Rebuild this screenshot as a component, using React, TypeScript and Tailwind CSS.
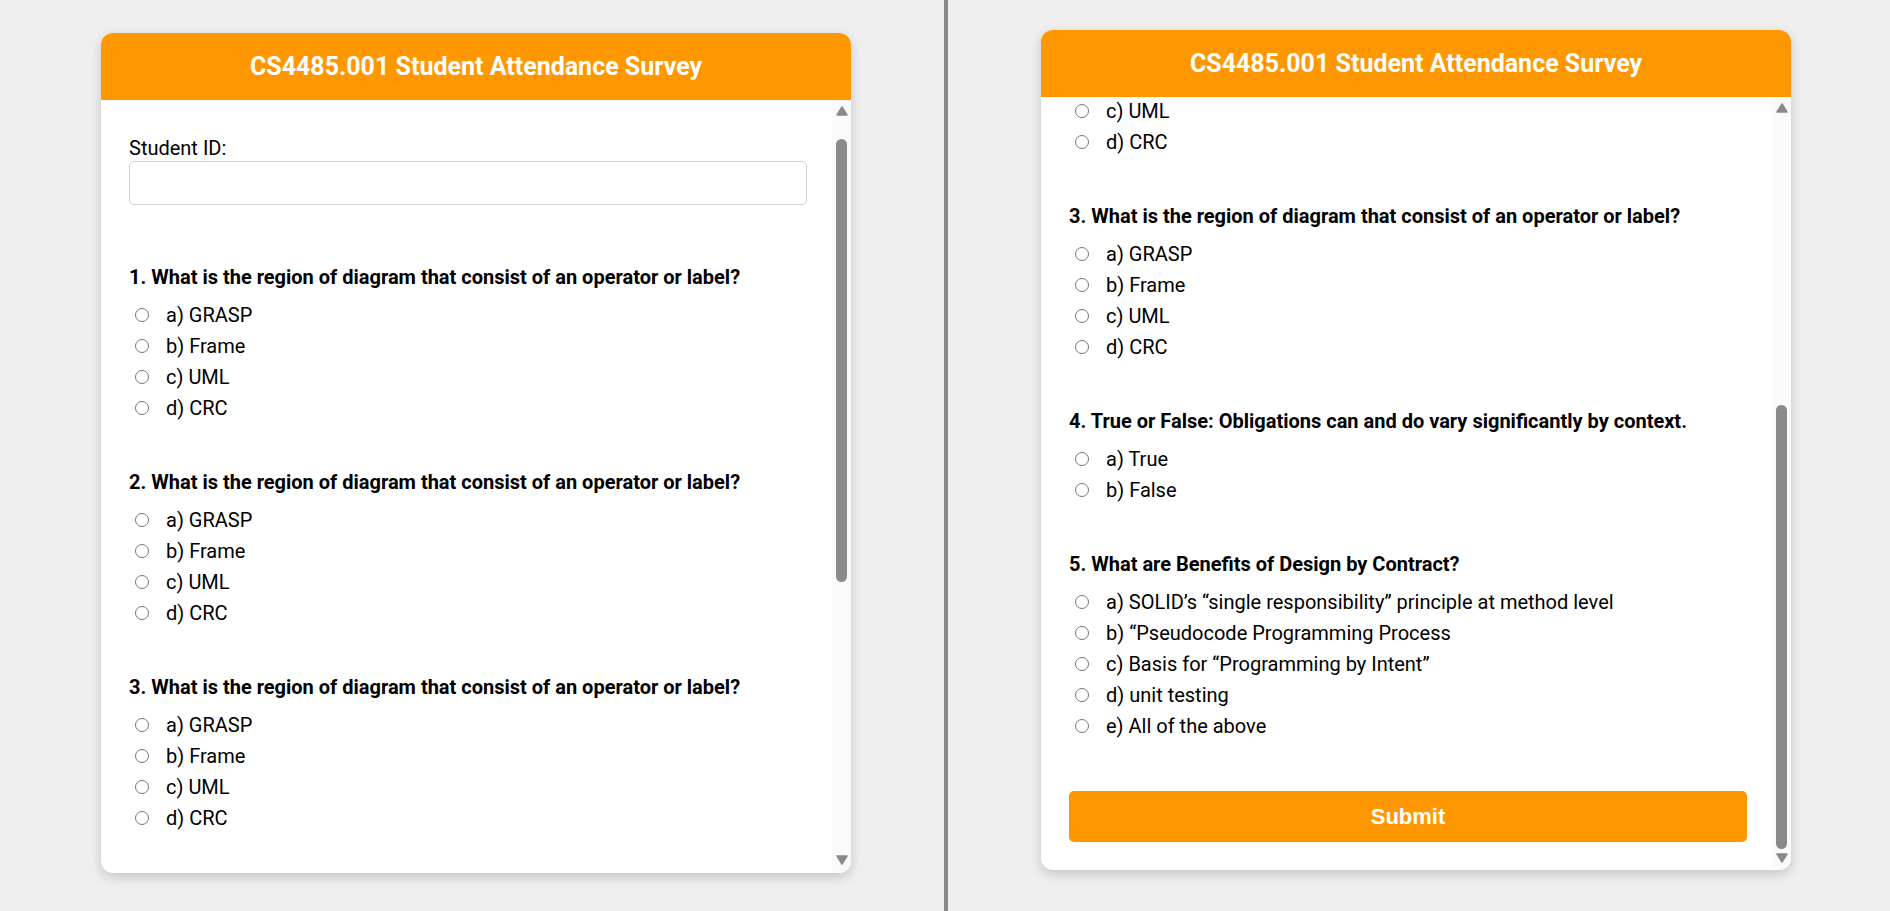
import React from "react";

type Question = {
  text: string;
  options: string[];
};

const regionOptions = ["a) GRASP", "b) Frame", "c) UML", "d) CRC"];

const questions: Question[] = [
  { text: "1. What is the region of diagram that consist of an operator or label?", options: regionOptions },
  { text: "2. What is the region of diagram that consist of an operator or label?", options: regionOptions },
  { text: "3. What is the region of diagram that consist of an operator or label?", options: regionOptions },
  { text: "4. True or False: Obligations can and do vary significantly by context.", options: ["a) True", "b) False"] },
  {
    text: "5. What are Benefits of Design by Contract?",
    options: [
      "a) SOLID\u2019s \u201csingle responsibility\u201d principle at method level",
      "b) \u201cPseudocode Programming Process",
      "c) Basis for \u201cProgramming by Intent\u201d",
      "d) unit testing",
      "e) All of the above",
    ],
  },
];

// Flecha del scrollbar clásico (triángulo gris)
function Arrow({ down = false }: { down?: boolean }) {
  return (
    <svg width="12" height="10" viewBox="0 0 12 10" className={down ? "rotate-180" : ""}>
      <path d="M6 1 L11 9 L1 9 Z" fill="#8a8a8a" stroke="#8a8a8a" strokeWidth="1.5" strokeLinejoin="round" />
    </svg>
  );
}

function Scrollbar({ thumbClass }: { thumbClass: string }) {
  return (
    <div className="flex w-[19px] shrink-0 flex-col bg-[#fafafa]">
      <div className="flex h-[22px] justify-center pt-[6px]">
        <Arrow />
      </div>
      <div className="flex flex-1 justify-center">
        <div className={`w-[11px] rounded-full bg-[#8a8a8a] ${thumbClass}`} />
      </div>
      <div className="flex h-[22px] items-start justify-center pt-[4px]">
        <Arrow down />
      </div>
    </div>
  );
}

function QuestionBlock({ q, name }: { q: Question; name: string }) {
  return (
    <div className="mb-[47px] last:mb-0">
      <p className="mb-[10px] text-[20px] font-bold leading-[24px] text-black">{q.text}</p>
      {q.options.map((opt) => (
        <label key={opt} className="flex h-[31px] items-center text-[20px] leading-[24px] text-black">
          <input type="radio" name={name} className="m-0 ml-[6px] h-[14px] w-[14px]" />
          <span className="ml-[17px]">{opt}</span>
        </label>
      ))}
    </div>
  );
}

function SurveyCard({ contentClass, thumbClass }: { contentClass: string; thumbClass: string }) {
  return (
    <div className="flex h-[840px] w-[750px] flex-col overflow-hidden rounded-[12px] bg-white shadow-[0_4px_12px_rgba(0,0,0,0.18)]">
      <div className="flex h-[67px] shrink-0 items-center justify-center bg-[#ff9800] text-[25px] font-bold text-white">
        CS4485.001 Student Attendance Survey
      </div>
      <div className="flex min-h-0 flex-1">
        <div className="min-w-0 flex-1 overflow-hidden pl-[28px] pr-[25px]">
          <div className={contentClass}>
            <div className="pt-[36px] text-[20px] leading-[24px] text-black">Student ID:</div>
            <input
              type="text"
              className="mt-[1px] block h-[44px] w-full rounded-[5px] border border-[#d0d0d0] bg-white px-3 text-[20px]"
            />
            <div className="mt-[60px]">
              {questions.map((q, i) => (
                <QuestionBlock key={i} q={q} name={`q${i}`} />
              ))}
            </div>
            <button className="mt-[50px] flex h-[51px] w-full items-center justify-center rounded-[5px] bg-[#ff9800] font-['Liberation_Sans',Arial,sans-serif] text-[22px] font-bold text-white">
              Submit
            </button>
            <div className="h-[26px]" />
          </div>
        </div>
        <Scrollbar thumbClass={thumbClass} />
      </div>
    </div>
  );
}

export default function App() {
  return (
    <div className="flex h-[911px] w-full overflow-hidden bg-[#efefef] font-['Roboto','Noto_Sans',sans-serif]">
      <div className="w-[944px] shrink-0 pl-[101px] pt-[33px]">
        <SurveyCard contentClass="" thumbClass="mt-[17px] h-[443px]" />
      </div>
      <div className="h-full w-[4px] shrink-0 bg-[#8a8a8a]" />
      <div className="flex-1 pl-[93px] pt-[30px]">
        <SurveyCard contentClass="-mt-[468px]" thumbClass="mt-[287px] h-[444px]" />
      </div>
    </div>
  );
}
